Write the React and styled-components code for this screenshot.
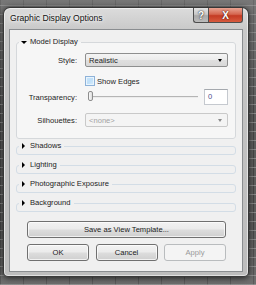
import React from "react";
import styled, { createGlobalStyle, css } from "styled-components";

const GlobalStyle = createGlobalStyle`
  html, body { margin: 0; padding: 0; background: #5a5a5a; }
  * { box-sizing: border-box; }
`;

const Desktop = styled.div`
  width: 256px;
  height: 285px;
  overflow: hidden;
  padding: 7px 7px 0 3px;
  background-color: #5e5e5e;
  background-image:
    linear-gradient(180deg, rgba(150,150,150,0.45) 0%, rgba(90,90,90,0) 40%, rgba(0,0,0,0) 80%, rgba(160,160,160,0.25) 100%),
    repeating-linear-gradient(0deg, rgba(190,190,190,0.45) 0 1px, transparent 1px 9px),
    repeating-linear-gradient(90deg, rgba(20,20,20,0.35) 0 1px, transparent 1px 23px);
  font-family: "Liberation Sans", Arial, sans-serif;
`;

const Window = styled.div`
  width: 246px;
  height: 270px;
  display: flex;
  flex-direction: column;
  padding: 0 5px 4px 5px;
  border: 1px solid rgba(30, 30, 30, 0.85);
  border-radius: 7px 7px 5px 5px;
  background: linear-gradient(180deg, #dcdcdc 0%, #c9c9c9 8%, #c2c2c2 40%, #bdbdbd 100%);
  box-shadow: 0 1px 6px rgba(0, 0, 0, 0.7), inset 0 0 0 1px rgba(255, 255, 255, 0.55);
`;

const TitleBar = styled.div`
  height: 21px;
  display: flex;
  align-items: flex-start;
`;

const Title = styled.div`
  flex: 1;
  padding-left: 1px;
  height: 21px;
  line-height: 21px;
  font-size: 8.6px;
  color: #111;
  text-shadow: 0 0 6px #fff, 0 0 3px #fff;
`;

const CaptionButton = styled.div`
  height: 15px;
  width: ${(p) => p.$w}px;
  display: flex;
  align-items: center;
  justify-content: center;
  border: 1px solid #4e4e4e;
  border-top: none;
  font-weight: bold;
  font-size: 10px;
  color: #fff;
  ${(p) =>
    p.$close
      ? css`
          border-radius: 0 0 3px 0;
          background: linear-gradient(180deg, #e8a493 0%, #d5664f 45%, #c43b24 55%, #d75a3e 100%);
          text-shadow: 0 0 2px #5a1a10, 0 0 1px #5a1a10;
        `
      : css`
          border-right: none;
          border-radius: 0 0 0 3px;
          background: linear-gradient(180deg, #e4e4e4 0%, #c8c8c8 45%, #a9a9a9 55%, #bcbcbc 100%);
          text-shadow: 0 0 2px #333, 0 0 1px #333;
        `}
`;

const Client = styled.div`
  flex: 1;
  border: 1px solid #8a8d90;
  background: #f0f0f0;
  padding: 7px 6px 0 6px;
  display: flex;
  flex-direction: column;
`;

const Section = styled.fieldset`
  margin: ${(p) => p.$mt || 0}px 0 0 0;
  padding: 0;
  min-width: 0;
  border: 1px solid ${(p) => (p.$open ? "#d5d8db" : "#d3dde6")};
  border-radius: 3px;
  background: ${(p) => (p.$open ? "#f6f6f6" : "transparent")};
  ${(p) => !p.$open && css`height: 14px;`}
`;

const Legend = styled.legend`
  margin-left: 2px;
  padding: 0 3px 0 1px;
  height: 10px;
  line-height: 10px;
  font-size: 7.6px;
  color: #1c1c1c;
  display: flex;
  align-items: center;
  gap: 3px;
`;

const Arrow = styled.span`
  width: 0;
  height: 0;
  ${(p) =>
    p.$open
      ? css`
          margin-left: 1px;
          border-left: 3px solid transparent;
          border-right: 3px solid transparent;
          border-top: 3px solid #000;
        `
      : css`
          margin-left: 2px;
          margin-right: 2px;
          border-top: 3px solid transparent;
          border-bottom: 3px solid transparent;
          border-left: 3px solid #000;
        `}
`;

const Rows = styled.div`
  padding: 6px 7px 11px 0;
`;

const Row = styled.div`
  display: grid;
  grid-template-columns: 60px 1fr;
  column-gap: 8px;
  align-items: center;
  height: ${(p) => p.$h}px;
  margin-top: ${(p) => p.$mt || 0}px;
`;

const Label = styled.div`
  text-align: right;
  font-size: 7.6px;
  color: #1e1e1e;
  white-space: nowrap;
`;

const Select = styled.div`
  height: 14px;
  display: flex;
  align-items: center;
  justify-content: space-between;
  padding: 0 5px 0 3px;
  border: 1px solid ${(p) => (p.$disabled ? "#c9c9c9" : "#8e8f8f")};
  border-radius: 2px;
  font-size: 7.6px;
  color: ${(p) => (p.$disabled ? "#a3a3a3" : "#1e1e1e")};
  background: ${(p) =>
    p.$disabled
      ? "#f4f4f4"
      : "linear-gradient(180deg, #f4f4f4 0%, #ececec 48%, #dfdfdf 52%, #d8d8d8 100%)"};
`;

const DropArrow = styled.span`
  width: 0;
  height: 0;
  border-left: 2.5px solid transparent;
  border-right: 2.5px solid transparent;
  border-top: 3px solid ${(p) => (p.$disabled ? "#8a8a8a" : "#000")};
`;

const CheckLine = styled.label`
  display: flex;
  align-items: center;
  gap: 2px;
  font-size: 7.6px;
  color: #1e1e1e;
`;

const CheckBox = styled.span`
  width: 10px;
  height: 10px;
  border: 1px solid #8eb2d8;
  background: linear-gradient(135deg, #cbe6fb 0%, #bfdff8 50%, #d9eefc 100%);
  box-shadow: inset 0 0 0 1px #e8f4fd;
`;

const SliderLine = styled.div`
  display: grid;
  grid-template-columns: 1fr 24px;
  column-gap: 6px;
  align-items: center;
  padding-left: 3px;
`;

const Track = styled.div`
  position: relative;
  height: 2px;
  border-top: 1px solid #b5b5b5;
  border-bottom: 1px solid #ececec;
`;

const Thumb = styled.span`
  position: absolute;
  left: 0;
  top: -6px;
  width: 5px;
  height: 10px;
  border: 1px solid #8d8d8d;
  border-radius: 2px;
  background: linear-gradient(90deg, #fafafa, #dcdcdc);
`;

const NumBox = styled.div`
  height: 16px;
  border: 1px solid #c5c9cf;
  border-top-color: #a5a9ae;
  background: #fff;
  font-size: 7.6px;
  color: #4b4b8a;
  padding-left: 3px;
  line-height: 14px;
`;

const ButtonRow = styled.div`
  margin: 6px 10px 0 11px;
  display: grid;
  grid-template-columns: repeat(3, 1fr);
  column-gap: 6.5px;
`;

const Btn = styled.button`
  height: 17px;
  padding: 0;
  font-family: "Liberation Sans", Arial, sans-serif;
  font-size: 7.6px;
  border-radius: 3px;
  ${(p) =>
    p.disabled
      ? css`
          border: 1px solid #b9bcbe;
          color: #9a9a9a;
          background: #f4f4f4;
        `
      : css`
          border: 1px solid #707070;
          color: #1a1a1a;
          background: linear-gradient(180deg, #f2f2f2 0%, #ebebeb 48%, #dddddd 52%, #cfcfcf 100%);
          box-shadow: inset 0 0 0 1px rgba(255, 255, 255, 0.7);
        `}
`;

const SaveBtn = styled(Btn)`
  margin: 9px 10px 0 11px;
`;

function Collapsed({ label, mt }) {
  return (
    <Section $mt={mt}>
      <Legend>
        <Arrow />
        {label}
      </Legend>
    </Section>
  );
}

export default function App() {
  return (
    <>
      <GlobalStyle />
      <Desktop>
        <Window>
          <TitleBar>
            <Title>Graphic Display Options</Title>
            <CaptionButton $w={15}>?</CaptionButton>
            <CaptionButton $w={35} $close>
              X
            </CaptionButton>
          </TitleBar>
          <Client>
            <Section $open>
              <Legend>
                <Arrow $open />
                Model Display
              </Legend>
              <Rows>
                <Row $h={14}>
                  <Label>Style:</Label>
                  <Select>
                    Realistic
                    <DropArrow />
                  </Select>
                </Row>
                <Row $h={10} $mt={9}>
                  <span />
                  <CheckLine>
                    <CheckBox />
                    Show Edges
                  </CheckLine>
                </Row>
                <Row $h={16} $mt={3}>
                  <Label>Transparency:</Label>
                  <SliderLine>
                    <Track>
                      <Thumb />
                    </Track>
                    <NumBox>0</NumBox>
                  </SliderLine>
                </Row>
                <Row $h={14} $mt={8}>
                  <Label>Silhouettes:</Label>
                  <Select $disabled>
                    &lt;none&gt;
                    <DropArrow $disabled />
                  </Select>
                </Row>
              </Rows>
            </Section>
            <Collapsed label="Shadows" mt={2} />
            <Collapsed label="Lighting" mt={5} />
            <Collapsed label="Photographic Exposure" mt={5} />
            <Collapsed label="Background" mt={5} />
            <SaveBtn>Save as View Template...</SaveBtn>
            <ButtonRow>
              <Btn>OK</Btn>
              <Btn>Cancel</Btn>
              <Btn disabled>Apply</Btn>
            </ButtonRow>
          </Client>
        </Window>
      </Desktop>
    </>
  );
}
